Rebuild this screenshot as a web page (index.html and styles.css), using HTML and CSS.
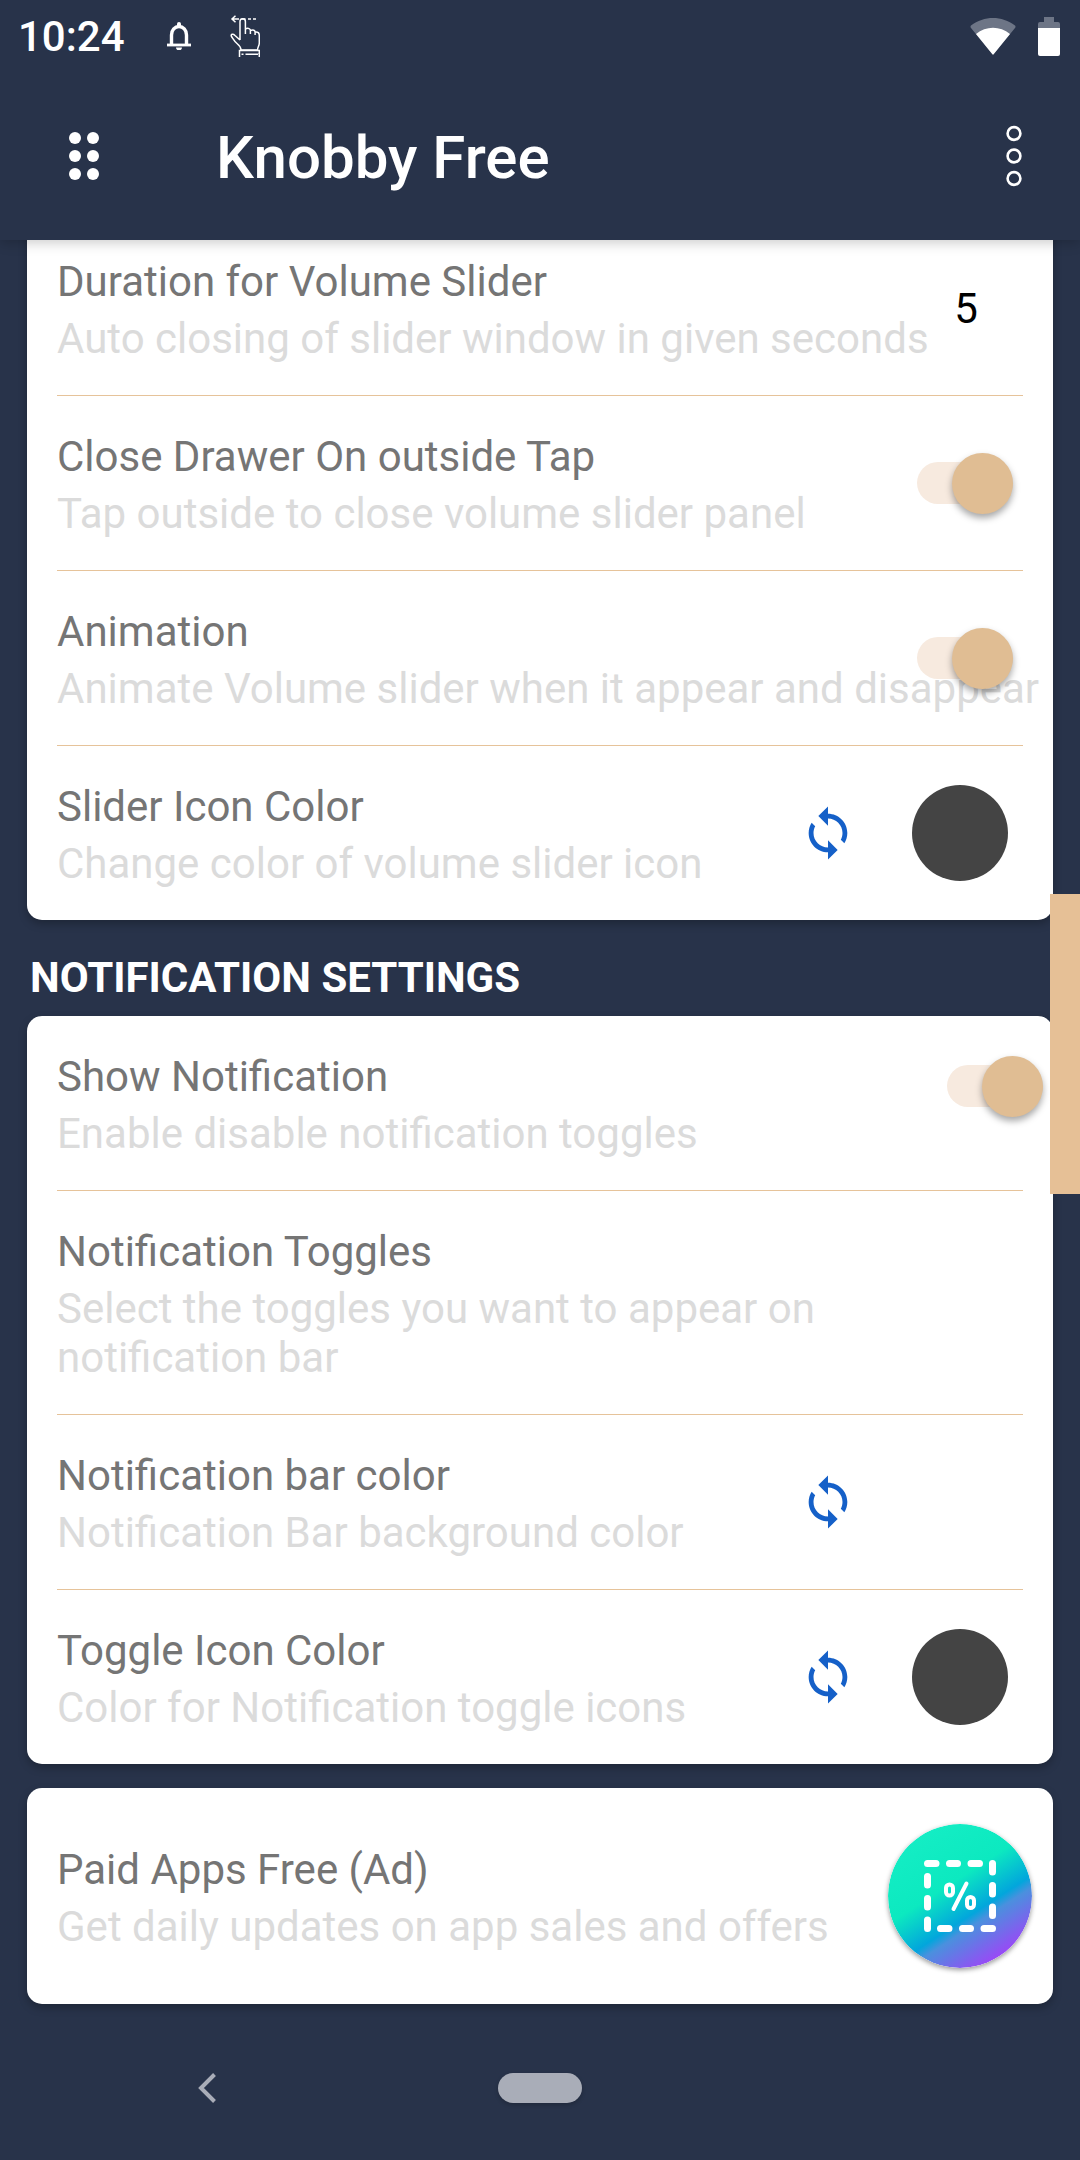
FILE: index.html
```html
<!DOCTYPE html>
<html lang="en">
<head>
<meta charset="utf-8">
<meta name="viewport" content="width=device-width">
<title>Knobby Free</title>
<link rel="stylesheet" href="styles.css">
</head>
<body>
<svg class="defs" aria-hidden="true">
  <symbol id="sync" viewBox="0 0 24 24"><path d="M12 4V1L8 5l4 4V6c3.310 0 6 2.690 6 6 0 1.010-.25 1.970-.7 2.800l1.460 1.460C19.540 15.030 20 13.570 20 12c0-4.420-3.580-8-8-8zm0 14c-3.310 0-6-2.690-6-6 0-1.010.25-1.970.7-2.800L5.240 7.740C4.460 8.970 4 10.430 4 12c0 4.420 3.580 8 8 8v3l4-4-4-4v3z"/></symbol>
</svg>
<header class="top">
  <div class="status">
    <span class="clock">10:24</span>
    <svg class="bell" viewBox="0 0 24 28" fill="none" stroke="#fff" aria-label="Alert"><path d="M4.500 22.500V13a7.500 8.500 0 0 1 15 0v9.500" stroke-width="3.400"/><path d="M0 23h24" stroke-width="2.800"/><path d="M9 25.500h6a3 2.800 0 0 1-6 0zM10 5V2a2 2 0 0 1 4 0v3z" fill="#fff" stroke="none"/></svg>
    <svg class="hand" viewBox="0 0 30 42" fill="none" stroke="#fff" stroke-width="1.500" aria-label="Gesture"><path d="M5.500 .7 2 4l3.500 3.300M2 4h7M11.500 4h4M18 4h3M23 4h3"/><path d="M10 25V6.500a2.700 2.700 0 0 1 5.400 0V19M15.400 14c3-1.500 5 0 5 1.500V19M20.400 15.500c3-1 4.700 0 4.700 1.500v3M25 17c3-.5 4.300 1 4.300 3.500V28c0 3-1.800 4-1.800 7H11c0-3-1.500-4.500-4-6.500-2.500-2-3.500-4-5.500-7C.3 19 3 18.500 5 20.500L10 25"/><path d="M9.500 42v-6.500h19.800V42M11.500 39.300h2M15.500 39.300h13"/></svg>
    <svg class="wifi" viewBox="0 0 46 37" aria-label="Wi-Fi"><path d="M1 7.500C14-2.500 32-2.500 45 7.500q1 1 0 2.500L23.800 36q-.8 1-1.600 0L1 10q-1-1.500 0-2.500z" fill="#6d7586"/><path d="M6 16c10-8.500 24-8.500 34 0L23.800 36q-.8 1-1.600 0z" fill="#fff"/></svg>
    <svg class="battery" viewBox="0 0 22 39" aria-label="Battery"><path d="M6 0h10v5h4q2 0 2 2v5H0V7q0-2 2-2h4z" fill="#6d7586"/><path d="M0 11h22v26q0 2-2 2H2q-2 0-2-2z" fill="#fff"/></svg>
  </div>
  <div class="appbar">
    <button class="icon-btn" aria-label="Menu"><svg class="grip" viewBox="0 0 30 48" fill="#fff"><circle cx="6" cy="6" r="6"/><circle cx="24" cy="6" r="6"/><circle cx="6" cy="24" r="6"/><circle cx="24" cy="24" r="6"/><circle cx="6" cy="42" r="6"/><circle cx="24" cy="42" r="6"/></svg></button>
    <h1>Knobby Free</h1>
    <button class="icon-btn" aria-label="More options"><svg class="more" viewBox="0 0 16 62" fill="none" stroke="#fff" stroke-width="2.600"><circle cx="8" cy="8.500" r="6.400"/><circle cx="8" cy="31" r="6.400"/><circle cx="8" cy="53.500" r="6.400"/></svg></button>
  </div>
</header>

<main>
  <section class="card first">
    <div class="row">
      <div class="text"><h3 id="duration">Duration for Volume Slider</h3><p>Auto closing of slider window in given seconds</p></div>
      <div class="controls"><input class="number" type="text" value="5" aria-labelledby="duration"></div>
    </div>
    <div class="row">
      <div class="text"><h3 id="tap">Close Drawer On outside Tap</h3><p>Tap outside to close volume slider panel</p></div>
      <div class="controls"><input class="switch" type="checkbox" role="switch" checked aria-labelledby="tap"></div>
    </div>
    <div class="row">
      <div class="text"><h3 id="anim">Animation</h3><p class="oneline">Animate Volume slider when it appear and disappear</p></div>
      <div class="controls"><input class="switch" type="checkbox" role="switch" checked aria-labelledby="anim"></div>
    </div>
    <div class="row">
      <div class="text"><h3>Slider Icon Color</h3><p>Change color of volume slider icon</p></div>
      <div class="controls"><button class="reset" aria-label="Reset slider icon color"><svg><use href="#sync"/></svg></button><button class="swatch dark" aria-label="Pick slider icon color"></button></div>
    </div>
  </section>

  <h2>NOTIFICATION SETTINGS</h2>
  <section class="card">
    <div class="row">
      <div class="text"><h3 id="show">Show Notification</h3><p>Enable disable notification toggles</p></div>
      <div class="controls edge"><input class="switch" type="checkbox" role="switch" checked aria-labelledby="show"></div>
    </div>
    <div class="row">
      <div class="text"><h3>Notification Toggles</h3><p class="wrap">Select the toggles you want to appear on notification bar</p></div>
    </div>
    <div class="row">
      <div class="text"><h3>Notification bar color</h3><p>Notification Bar background color</p></div>
      <div class="controls"><button class="reset" aria-label="Reset notification bar color"><svg><use href="#sync"/></svg></button><button class="swatch" aria-label="Pick notification bar color"></button></div>
    </div>
    <div class="row">
      <div class="text"><h3>Toggle Icon Color</h3><p>Color for Notification toggle icons</p></div>
      <div class="controls"><button class="reset" aria-label="Reset toggle icon color"><svg><use href="#sync"/></svg></button><button class="swatch dark" aria-label="Pick toggle icon color"></button></div>
    </div>
  </section>

  <section class="card promo">
    <div class="text"><h3>Paid Apps Free (Ad)</h3><p>Get daily updates on app sales and offers</p></div>
    <svg class="promo-icon" viewBox="0 0 144 144" aria-hidden="true">
      <defs><linearGradient id="deal" gradientUnits="userSpaceOnUse" x1="34" y1="10" x2="112" y2="130"><stop offset="0" stop-color="#14edc4"/><stop offset=".4" stop-color="#0ce9c0"/><stop offset=".66" stop-color="#02a6dc"/><stop offset=".73" stop-color="#4a90de"/><stop offset="1" stop-color="#964cf5"/></linearGradient></defs>
      <circle cx="72" cy="72" r="72" fill="url(#deal)"/>
      <g fill="none" stroke="#fff" stroke-linecap="round" stroke-width="7">
        <path d="M39.500 39.500H48M61.500 39.500H69.500M83 39.500H91.500M104.500 39.500V48M104.500 61.500V70M104.500 83V91.500M104.500 104.500H96M82.500 104.500H74.500M61 104.500H52.500M39.500 104.500V96M39.500 83V74.500M39.500 61V52.500"/>
        <path d="M78.500 59.500 65.500 85" stroke-width="4"/>
        <rect x="58" y="60.500" width="7" height="11" rx="3.500" stroke-width="4"/><rect x="79" y="73" width="7" height="11" rx="3.500" stroke-width="4"/>
      </g>
    </svg>
  </section>
</main>

<nav class="sysnav" aria-label="System">
  <button class="icon-btn" aria-label="Back"><svg class="back" viewBox="0 0 18 30" fill="none" stroke="#a9adb8" stroke-width="4"><path d="M16.500 1.500 3 15l13.500 13.500"/></svg></button>
  <button class="pill" aria-label="Home"></button>
</nav>
<button class="edge-handle" aria-label="Open slider"></button>
</body>
</html>
```
FILE: styles.css
```css
* { box-sizing: border-box; }
body {
  margin: 0;
  min-height: 100vh;
  display: flex;
  flex-direction: column;
  position: relative;
  background: #28334a;
  color: #757575;
  font-family: Roboto, sans-serif;
  font-size: 42px;
  line-height: 49px;
}
h1, h2, h3, p { margin: 0; font-size: inherit; font-weight: 400; }
button, input { font: inherit; padding: 0; margin: 0; border: 0; background: none; }
svg { display: block; }
.defs { position: absolute; width: 0; height: 0; }

/* status bar and app bar */
.top {
  position: sticky;
  top: 0;
  z-index: 2;
  background: #28334a;
  box-shadow: 0 3px 12px rgba(0, 0, 0, .2);
}
.status {
  display: flex;
  align-items: center;
  height: 72px;
  padding: 0 20px 0 18px;
  color: #fff;
}
.clock { font-weight: 500; width: 149px; }
.bell { width: 24px; height: 28px; }
.hand { width: 30px; height: 42px; margin: 0 auto 0 39px; }
.wifi { width: 46px; height: 37px; margin-right: 22px; }
.battery { width: 22px; height: 39px; }
.appbar {
  display: grid;
  grid-template-columns: 168px 1fr 132px;
  align-items: center;
  height: 168px;
}
.appbar h1 {
  padding: 4px 0 0 48px;
  color: #fff;
  font-size: 60px;
  line-height: 70px;
  font-weight: 500;
}
.icon-btn { display: grid; place-items: center; height: 144px; }
.grip { width: 30px; height: 48px; }
.more { width: 16px; height: 62px; }

/* settings cards */
main { padding: 0 27px; }
.card {
  background: #fff;
  border-radius: 15px;
  box-shadow: 0 4px 8px rgba(0, 0, 0, .25);
}
.first { margin-top: -19px; border-radius: 0 0 15px 15px; }
.row {
  display: grid;
  grid-template-columns: minmax(0, 1fr);
  margin: 0 30px;
  padding: 36px 0 32px;
}
.row + .row { border-top: 1px solid #e6c39a; }
.text, .controls { grid-area: 1 / 1; }
.text p { margin-top: 8px; color: #dbdbdb; }
.oneline { white-space: nowrap; }
.text .wrap { max-width: 880px; }
.controls {
  display: flex;
  align-items: center;
  justify-self: end;
  gap: 54px;
  margin: -36px 0 -32px;
  padding-right: 15px;
}
.controls.edge { align-items: start; margin-right: -30px; padding: 49px 10px 0 0; }
.number { width: 84px; text-align: center; color: #000; }
.switch {
  appearance: none;
  display: flex;
  align-items: center;
  justify-content: flex-end;
  width: 96px;
  height: 42px;
  margin-right: -5px;
  background: #f7eadf;
  border-radius: 21px;
}
.controls.edge .switch { margin: 0; }
.switch::before {
  content: "";
  flex: none;
  width: 61px;
  height: 61px;
  border-radius: 50%;
  background: #e0bd93;
  box-shadow: 0 4px 7px rgba(0, 0, 0, .35);
}
.reset { width: 60px; height: 60px; fill: #1560c8; }
.reset svg { width: 58px; height: 58px; margin: auto; }
.swatch { width: 96px; height: 96px; border-radius: 50%; }
.swatch.dark { background: #444; }
h2 { padding: 33px 0 14px 3px; color: #fff; font-weight: 700; }
.promo {
  display: flex;
  align-items: center;
  justify-content: space-between;
  min-height: 216px;
  margin-top: 24px;
  padding: 0 21px 0 30px;
}
.promo .text { padding-top: 4px; }
.promo-icon {
  width: 144px;
  height: 144px;
  border-radius: 50%;
  box-shadow: 0 2px 5px rgba(0, 0, 0, .4);
}

/* system navigation and floating handle */
.sysnav {
  display: grid;
  grid-template-columns: repeat(3, 1fr);
  place-items: center;
  height: 144px;
  margin-top: auto;
  padding: 0 41px;
}
.back { width: 18px; height: 30px; }
.pill { width: 84px; height: 30px; border-radius: 15px; background: #a9adb8; box-shadow: 0 2px 4px rgba(0, 0, 0, .2); }
.edge-handle {
  position: absolute;
  z-index: 3;
  top: 894px;
  right: 0;
  width: 30px;
  height: 300px;
  background: #e6c096;
}
```
